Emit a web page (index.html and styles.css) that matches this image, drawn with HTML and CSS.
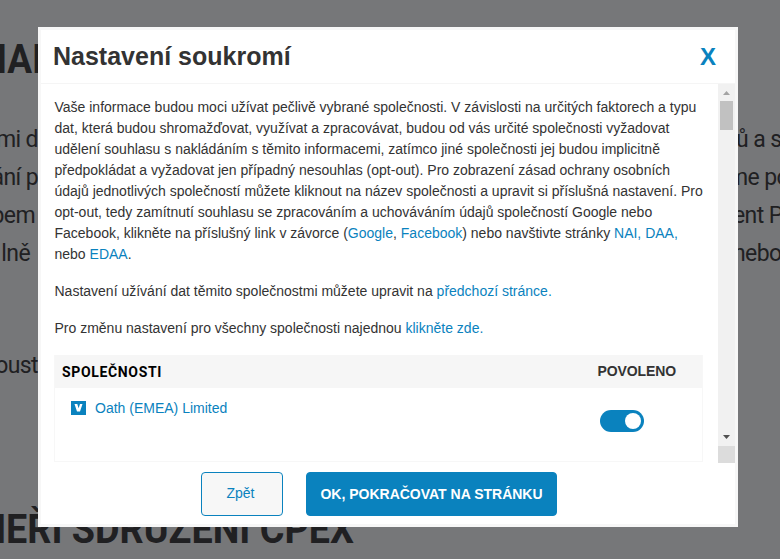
FILE: index.html
```html
<!DOCTYPE html>
<html lang="cs">
<head>
<meta charset="utf-8">
<title>Nastavení soukromí</title>
<link rel="stylesheet" href="styles.css">
</head>
<body>
<main class="page">
  <h2 class="page-heading top"><span>MAI</span></h2>
  <div class="page-row"><span class="left">mi d</span><span class="right">ů a s</span></div>
  <div class="page-row"><span class="left">ání p</span><span class="right shifted">me po</span></div>
  <div class="page-row"><span class="left inset-s">bem</span><span class="right shifted-s">ent P</span></div>
  <div class="page-row"><span class="left inset-l">lně</span><span class="right shifted-s">nebo</span></div>
  <div class="page-row last"><span class="left">oust</span></div>
  <h2 class="page-heading bottom"><span>MEŘÍ SDRUŽENÍ CPEX</span></h2>
</main>
<section class="dialog" role="dialog">
  <header class="dialog-head">
    <h1>Nastavení soukromí</h1>
    <a class="close">X</a>
  </header>
  <div class="dialog-body">
    <div class="content">
      <p>Vaše informace budou moci užívat pečlivě vybrané společnosti. V závislosti na určitých faktorech a typu<br>
      dat, která budou shromažďovat, využívat a zpracovávat, budou od vás určité společnosti vyžadovat<br>
      udělení souhlasu s nakládáním s těmito informacemi, zatímco jiné společnosti jej budou implicitně<br>
      předpokládat a vyžadovat jen případný nesouhlas (opt-out). Pro zobrazení zásad ochrany osobních<br>
      údajů jednotlivých společností můžete kliknout na název společnosti a upravit si příslušná nastavení. Pro<br>
      opt-out, tedy zamítnutí souhlasu se zpracováním a uchováváním údajů společností Google nebo<br>
      Facebook, klikněte na příslušný link v závorce (<a>Google</a>, <a>Facebook</a>) nebo navštivte stránky <a>NAI, DAA,</a><br>
      nebo <a>EDAA</a>.</p>
      <p>Nastavení užívání dat těmito společnostmi můžete upravit na <a>předchozí stránce.</a></p>
      <p>Pro změnu nastavení pro všechny společnosti najednou <a>klikněte zde.</a></p>
      <div class="vendors">
        <div class="vendors-head"><span class="companies">SPOLEČNOSTI</span><span class="allowed">POVOLENO</span></div>
        <div class="vendor">
          <svg class="badge" width="15" height="14" viewBox="0 0 15 14"><rect width="15" height="14" fill="#0a82be"/><path d="M3.500 3h2.800l1.300 4.300L9 3h2.500L9 10.500H6z" fill="#fff"/></svg>
          <a>Oath (EMEA) Limited</a>
          <span class="toggle"></span>
        </div>
      </div>
    </div>
    <div class="scrollbar">
      <svg width="17" height="17" viewBox="0 0 17 17"><path d="M5 11L8.500 7 12 11z" fill="#a3a3a3"/></svg>
      <div class="thumb"></div>
      <svg class="down" width="17" height="17" viewBox="0 0 17 17"><path d="M5 6h7L8.500 10z" fill="#505050"/></svg>
      <div class="corner"></div>
    </div>
  </div>
  <footer class="dialog-foot">
    <button class="back">Zpět</button>
    <button class="ok">OK, POKRAČOVAT NA STRÁNKU</button>
  </footer>
</section>
</body>
</html>
```
FILE: styles.css
```css
* { box-sizing: border-box; }
body {
  margin: 0;
  height: 559px;
  overflow: hidden;
  background: #767779;
  font-family: "Liberation Sans", Arial, sans-serif;
}
a { color: #0a82be; }
.page { height: 559px; padding-top: 36px; color: #202022; font-family: Roboto, sans-serif; overflow: hidden; }
.page-heading { margin: 0; height: 46px; font-size: 41px; line-height: 46px; white-space: nowrap; display: flex; }
.page-heading span { transform-origin: left; }
.page-heading.top { width: 43px; justify-content: flex-end; }
.page-heading.top span { transform-origin: right; transform: scaleX(.9); }
.page-heading.bottom { margin-top: 121px; }
.page-heading.bottom span { margin-left: -27px; transform: scaleX(.92); }
.page-row { height: 38px; font-size: 23px; line-height: 38px; display: flex; justify-content: space-between; letter-spacing: -.6px; }
.page-heading.top + .page-row { margin-top: 39px; }
.page-row.last { margin-top: 74px; }
.left { width: 38px; display: flex; justify-content: flex-end; white-space: nowrap; }
.inset-s { padding-right: 3px; }
.inset-l { padding-right: 8px; }
.right { width: 44px; white-space: nowrap; }
.shifted { text-indent: -8px; }
.shifted-s { text-indent: -3px; }
.dialog {
  position: absolute;
  left: 38px;
  top: 27px;
  width: 700px;
  height: 500px;
  border: 3px solid #f7f7f7;
  background: #fff;
  display: flex;
  flex-direction: column;
}
.dialog-head {
  height: 54px;
  border-bottom: 1px solid #f5f5f5;
  padding: 0 19px 0 12px;
  display: flex;
  justify-content: space-between;
  align-items: center;
}
h1 { margin: 0 0 2px; font-size: 25px; line-height: 30px; color: #333; white-space: nowrap; }
.close { font-size: 24px; line-height: 30px; font-weight: bold; }
.dialog-body { height: 379px; display: flex; justify-content: space-between; }
.content { width: 649px; margin-left: 13px; padding-top: 13px; font-size: 14px; line-height: 21px; color: #333; }
p { margin: 0 0 16px; padding-left: .5px; white-space: nowrap; }
.vendors { height: 107px; border: 1px solid #f7f7f7; border-top: 0; }
.vendors-head {
  height: 33px;
  padding: 0 26px 0 7px;
  background: #f6f6f6;
  display: flex;
  justify-content: space-between;
  font-weight: bold;
  line-height: 33px;
}
.companies { color: #000; font-family: Roboto, sans-serif; letter-spacing: .65px; line-height: 34px; }
.allowed { font-size: 14px; line-height: 32px; letter-spacing: -.1px; }
.vendor { display: flex; padding: 10px 58px 0 16px; }
.badge { margin: 3px 9px 0 0; }
.toggle { width: 44px; height: 22px; margin: 12px 0 0 auto; padding: 3px; border-radius: 11px; background: #0a82be; display: flex; justify-content: flex-end; }
.toggle::after { content: ""; width: 16px; height: 16px; border-radius: 50%; background: #fff; }
.scrollbar { width: 17px; height: 379px; background: #f1f1f1; display: flex; flex-direction: column; }
.thumb { width: 13px; height: 29px; margin-left: 2px; background: #c1c1c1; }
.down { margin-top: auto; }
.corner { height: 17px; background: #dcdcdc; }
.dialog-foot { display: flex; gap: 23px; padding: 9px 0 0 160px; }
button { height: 44px; padding: 0; border: 1px solid #0a82be; border-radius: 4px; font-family: inherit; font-size: 14px; }
.back { width: 82px; padding: 0 3px 2px 0; background: #f7f7f7; color: #0a82be; }
.ok { width: 251px; background: #0a82be; color: #fff; font-weight: bold; }
```
